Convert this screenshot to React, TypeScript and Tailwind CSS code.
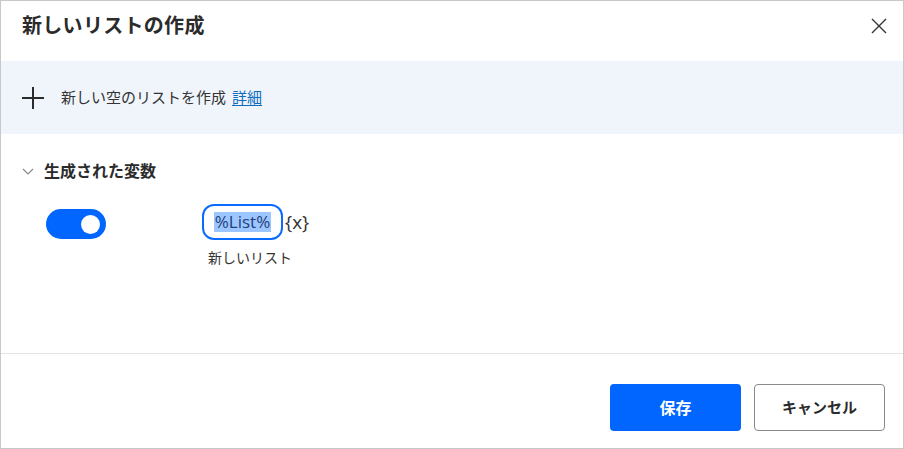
import React from "react";

const font = "font-['Open_Sans','Noto_Sans_CJK_JP',sans-serif]";

const CloseIcon = () => (
    <svg width="16" height="16" viewBox="0 0 16 16" className="text-[#333]">
        <path d="M1 1 L15 15 M15 1 L1 15" stroke="currentColor" strokeWidth="1.4" fill="none" />
    </svg>
);

const PlusIcon = () => (
    <svg width="22" height="22" viewBox="0 0 22 22" className="text-[#2b2b2b]">
        <path d="M11 0 V22 M0 11 H22" stroke="currentColor" strokeWidth="2" fill="none" />
    </svg>
);

const Chevron = () => (
    <svg width="12" height="7" viewBox="0 0 12 7" className="text-[#8a8a8a]">
        <path d="M1 1 L6 6 L11 1" stroke="currentColor" strokeWidth="1.2" fill="none" />
    </svg>
);

const App = () => {
    return (
        <div className={`${font} w-[904px] h-[449px] bg-white border border-[#c8c8c8] flex flex-col text-[#2b2b2b]`}>
            {/* header */}
            <div className="h-[60px] flex items-center justify-between pl-[21px] pr-[16px]">
                <h1 className="text-[20px] font-bold tracking-[0.3px] -mt-[10px]">新しいリストの作成</h1>
                <button className="-mt-[10px]">
                    <CloseIcon />
                </button>
            </div>

            {/* info band */}
            <div className="h-[73px] bg-[#f0f5fc] flex items-center pl-[21px] gap-[17px]">
                <PlusIcon />
                <div className="text-[15px] text-[#333] flex items-center gap-[6px]">
                    <span>新しい空のリストを作成</span>
                    <a className="text-[#0f6cbd] underline underline-offset-2">詳細</a>
                </div>
            </div>

            {/* variables */}
            <div className="flex-1 flex flex-col pl-[21px]">
                <div className="flex items-center gap-[10px] mt-[25px]">
                    <Chevron />
                    <span className="text-[16px] font-bold">生成された変数</span>
                </div>
                <div className="flex mt-[21px]">
                    <div className="w-[60px] h-[30px] rounded-full bg-[#0066ff] flex items-center justify-end pr-[6px] ml-[24px] mt-[5px]">
                        <div className="w-[19px] h-[19px] rounded-full bg-white" />
                    </div>
                    <div className="flex flex-col ml-[96px]">
                        <div className="flex items-center">
                            <div className="w-[81px] h-[36px] rounded-[12px] border-2 border-[#0a6cff] flex items-center justify-center">
                                <span className="bg-[#9cc6ff] text-[#23407a] text-[17px] leading-[20px] px-[1px]">%List%</span>
                            </div>
                            <span className="text-[19px] text-[#333] ml-[2px]">{"{x}"}</span>
                        </div>
                        <span className="text-[14px] text-[#333] mt-[7px] ml-[6px]">新しいリスト</span>
                    </div>
                </div>
            </div>

            {/* footer */}
            <div className="h-[95px] border-t border-[#e4e4e4] flex items-start justify-end gap-[13px] pr-[18px] pt-[30px]">
                <button className="w-[131px] h-[47px] rounded-[4px] bg-[#0066ff] text-white text-[16px] font-bold">
                    保存
                </button>
                <button className="w-[131px] h-[47px] rounded-[4px] border border-[#8a8a8a] bg-white text-[#2b2b2b] text-[15px] font-bold">
                    キャンセル
                </button>
            </div>
        </div>
    );
};

export default App;
